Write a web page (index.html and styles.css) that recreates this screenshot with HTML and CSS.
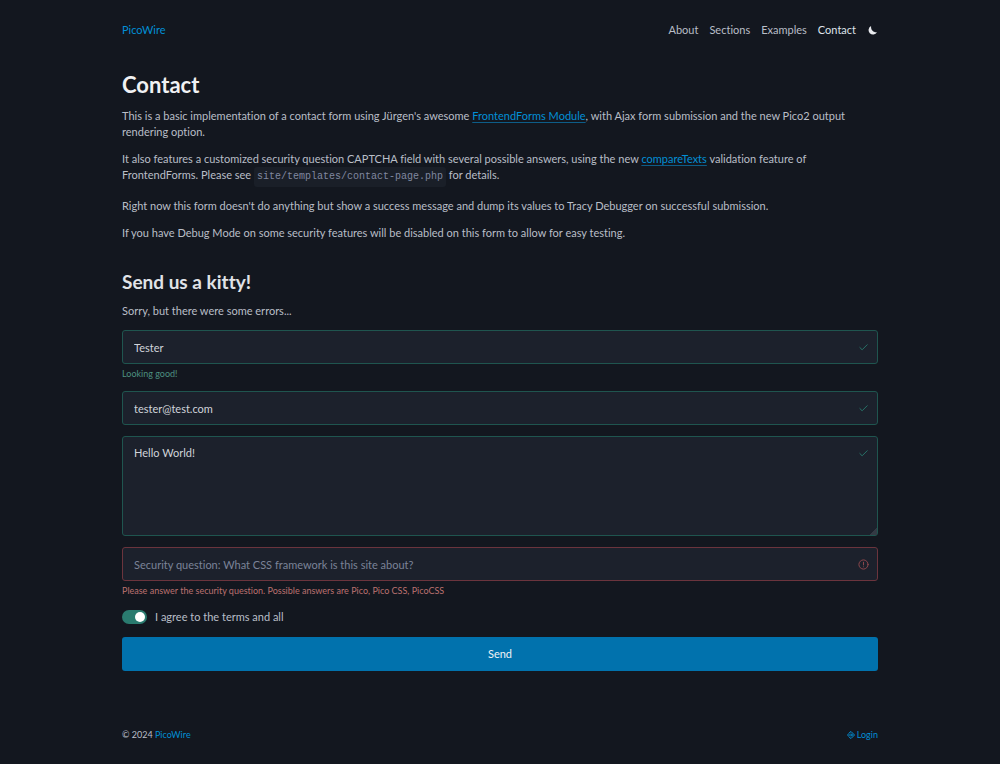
FILE: index.html
```html
<!DOCTYPE html>
<html lang="en">
<head>
    <meta charset="UTF-8">
    <meta name="viewport" content="width=device-width, initial-scale=1.0">
    <title>Contact - PicoWire</title>
    <link rel="stylesheet" href="styles.css">
</head>
<body>
    <!-- Navigation -->
    <header class="container">
        <nav class="navbar">
            <a class="brand" href="#">PicoWire</a>
            <ul class="menu">
                <li><a href="#">About</a></li>
                <li><a href="#">Sections</a></li>
                <li><a href="#">Examples</a></li>
                <li><a href="#" class="active" aria-current="page">Contact</a></li>
                <li>
                    <button class="theme-toggle" type="button" aria-label="Toggle theme">
                        <svg viewBox="0 0 32 32" width="11" height="11" aria-hidden="true">
                            <path fill="currentColor" d="M12 3A13 13 0 1 0 29 21C20 23 10 15 12 3Z"/>
                        </svg>
                    </button>
                </li>
            </ul>
        </nav>
    </header>

    <!-- Content -->
    <main class="container">
        <section class="intro">
            <h1>Contact</h1>
            <p>This is a basic implementation of a contact form using Jürgen's awesome <a href="#">FrontendForms Module</a>, with Ajax form submission and the new Pico2 output rendering option.</p>
            <p>It also features a customized security question CAPTCHA field with several possible answers, using the new <a href="#">compareTexts</a> validation feature of FrontendForms. Please see <code>site/templates/contact-page.php</code> for details.</p>
            <p>Right now this form doesn't do anything but show a success message and dump its values to Tracy Debugger on successful submission.</p>
            <p>If you have Debug Mode on some security features will be disabled on this form to allow for easy testing.</p>
        </section>

        <section>
            <h2>Send us a kitty!</h2>
            <p>Sorry, but there were some errors...</p>

            <form class="contact-form" action="#" method="post" novalidate>
                <div class="field">
                    <input class="control valid" type="text" name="name" value="Tester" aria-label="Name" aria-describedby="name-help">
                    <small class="help valid" id="name-help">Looking good!</small>
                </div>
                <div class="field">
                    <input class="control valid" type="email" name="email" value="tester@test.com" aria-label="Email">
                </div>
                <div class="field">
                    <textarea class="control valid" name="message" rows="5" aria-label="Message">Hello World!</textarea>
                </div>
                <div class="field">
                    <input class="control invalid" type="text" name="question" placeholder="Security question: What CSS framework is this site about?" aria-label="Security question" aria-invalid="true" aria-describedby="question-help">
                    <small class="help invalid" id="question-help">Please answer the security question. Possible answers are Pico, Pico CSS, PicoCSS</small>
                </div>
                <label class="terms">
                    <input class="switch" type="checkbox" role="switch" name="terms" checked>
                    I agree to the terms and all
                </label>
                <button class="send-btn" type="submit">Send</button>
            </form>
        </section>
    </main>

    <!-- Footer -->
    <footer class="container footer">
        <small>© 2024 <a href="#">PicoWire</a></small>
        <small><a href="#" class="login">
            <svg viewBox="0 0 16 16" width="8" height="8" fill="none" stroke="currentColor" stroke-width="2" aria-hidden="true">
                <path d="M3 5L8 1L15 8L8 15L3 11M0 8H11M8 5L11 8L8 11"/>
            </svg>
            Login</a></small>
    </footer>
</body>
</html>
```
FILE: styles.css
```css
* {
    margin: 0;
    padding: 0;
    box-sizing: border-box;
}

body {
    font-family: Lato, "Noto Sans", sans-serif;
    font-size: 11px;
    line-height: 16px;
    font-variant-ligatures: none;
    color: #b9bec7;
    background-color: #13171f;
}

a {
    color: #028fd6;
    text-decoration: none;
}

.container {
    max-width: 756px;
    margin: 0 auto;
}

/* Navigation */
.navbar {
    display: flex;
    align-items: center;
    justify-content: space-between;
    height: 60px;
}

.menu {
    display: flex;
    align-items: center;
    gap: 11px;
    list-style: none;
}

.menu a {
    color: #b9bec7;
}

.menu a.active {
    color: #dfe3eb;
}

.theme-toggle {
    display: block;
    border: none;
    background: none;
    color: #e8eaee;
    cursor: pointer;
}

.theme-toggle svg {
    display: block;
}

/* Typography */
h1 {
    margin: 12px 0 11px;
    font-size: 22px;
    line-height: 25px;
    color: #f0f1f3;
}

h2 {
    margin-bottom: 10px;
    font-size: 19px;
    line-height: 22px;
    color: #e0e3e7;
}

p {
    margin-bottom: 11px;
}

p a {
    text-decoration: underline;
    text-decoration-color: #0d5d88;
    text-underline-offset: 2px;
}

code {
    display: inline-block;
    padding: 2px 3px;
    border-radius: 3px;
    background-color: #1a1f28;
    color: #8088a0;
    font-family: "Liberation Mono", monospace;
    font-size: 10px;
}

.intro {
    margin-bottom: 30px;
}

/* Form */
.contact-form,
.field {
    display: flex;
    flex-direction: column;
}

.contact-form {
    gap: 11px;
}

.control {
    width: 100%;
    height: 34px;
    padding: 8px 11px;
    border: 1px solid #2a3140;
    border-radius: 3px;
    background-color: #1c212c;
    background-repeat: no-repeat;
    background-position: right 8px top 11px;
    background-size: 11px 11px;
    color: #d0d4da;
    font: inherit;
    outline: none;
}

.control::placeholder {
    color: #7b8398;
}

textarea.control {
    display: block;
    height: 100px;
    resize: vertical;
}

textarea.control::-webkit-resizer {
    background: linear-gradient(135deg, transparent 75%, #343a44 75%);
}

.control.valid {
    border-color: #1f554f;
    background-image: url("data:image/svg+xml,%3Csvg xmlns='http://www.w3.org/2000/svg' viewBox='0 0 24 24' fill='none' stroke='%232a7b6f' stroke-width='2' stroke-linecap='round' stroke-linejoin='round'%3E%3Cpolyline points='20 6 9 17 4 12'/%3E%3C/svg%3E");
}

.control.invalid {
    border-color: #6b343d;
    background-image: url("data:image/svg+xml,%3Csvg xmlns='http://www.w3.org/2000/svg' viewBox='0 0 24 24' fill='none' stroke='%23964a50' stroke-width='2' stroke-linecap='round' stroke-linejoin='round'%3E%3Ccircle cx='12' cy='12' r='10'/%3E%3Cline x1='12' y1='7' x2='12' y2='13'/%3E%3Cline x1='12' y1='17' x2='12.01' y2='17'/%3E%3C/svg%3E");
}

.help {
    margin-top: 4px;
    font-size: 9px;
    line-height: 12px;
}

.help.valid {
    color: #4d9080;
}

.help.invalid {
    color: #bb716f;
}

.terms {
    display: flex;
    align-items: center;
    gap: 8px;
    min-height: 18px;
}

.switch {
    appearance: none;
    width: 25px;
    height: 14px;
    padding: 2px;
    border-radius: 7px;
    background-color: #2a7b6f;
}

.switch::before {
    content: "";
    display: block;
    width: 10px;
    height: 10px;
    border-radius: 50%;
    background-color: #fff;
}

.switch:checked::before {
    margin-left: auto;
}

.send-btn {
    height: 34px;
    border: none;
    border-radius: 3px;
    background-color: #0172ad;
    color: #f0f3f6;
    font: inherit;
    cursor: pointer;
}

/* Footer */
.footer {
    display: flex;
    justify-content: space-between;
    padding: 56px 0 20px;
}

.footer small {
    font-size: 9px;
}

.login {
    display: flex;
    align-items: center;
    gap: 2px;
}
```
